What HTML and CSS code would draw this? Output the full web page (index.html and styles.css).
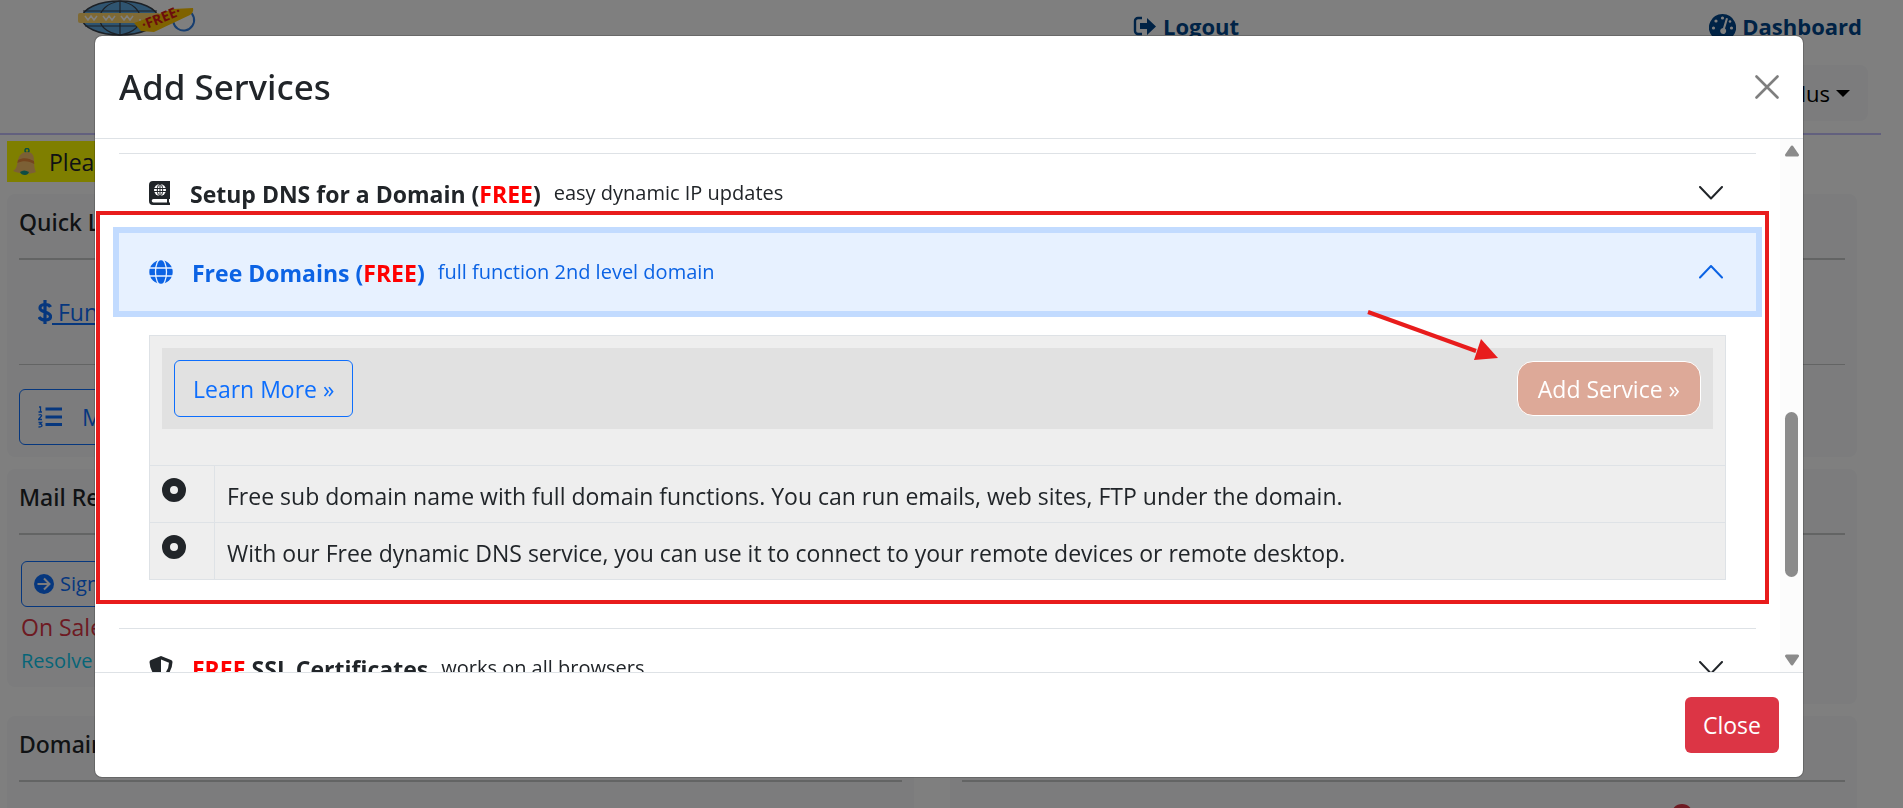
FILE: index.html
```html
<!DOCTYPE html>
<html lang="en">
<head>
  <meta charset="UTF-8">
  <meta name="viewport" content="width=device-width, initial-scale=1.0">
  <title>Dashboard - Add Services</title>
  <link rel="stylesheet" href="styles.css">
</head>
<body>

<div class="page">
  <header class="top">
    <div class="top-links">
      <svg class="logo" viewBox="0 0 120 36" aria-label="www free">
        <ellipse cx="42" cy="18" rx="38" ry="17" fill="#5fa8e0" stroke="#39424d" stroke-width="1.5"/>
        <path d="M42 1v34M5 11h74M7 26h70M42 1c-26 4-28 30 0 34M42 1c26 4 28 30 0 34" fill="none" stroke="#39424d" stroke-width="1.2"/>
        <rect x="0" y="13" width="82" height="10" rx="2" fill="#ffd56b"/>
        <path d="M7 16l3 4 3-4 3 4 3-4M25 16l3 4 3-4 3 4 3-4M43 16l3 4 3-4 3 4 3-4M61 20h2" fill="none" stroke="#fff" stroke-width="1.5"/>
        <path d="M97 14a10.500 10.500 0 1 0 14-3" fill="none" stroke="#2f7de0" stroke-width="2"/>
        <path d="M56 23L95 9l20-1q1 4-3 7L76 32l-13-1z" fill="#ffc400"/>
        <text x="66" y="30" transform="rotate(-22 66 30)" class="logo-text">·FREE·</text>
      </svg>
      <a class="top-link logout" href="#">
        <svg width="24" height="24" viewBox="0 0 24 24"><path d="M9 4H5a3 3 0 0 0-3 3v10a3 3 0 0 0 3 3h4" fill="none" stroke="currentColor" stroke-width="2.4"/><path d="M7 9h7V4l9 8.500-9 8.500v-6H7z" fill="currentColor"/></svg>
        Logout
      </a>
      <a class="top-link" href="#">
        <svg width="27" height="24" viewBox="0 0 27 24"><path d="M13.500 0A13.500 13.500 0 0 0 3 22q1 2 3 2h15q2 0 3-2A13.500 13.500 0 0 0 13.500 0z" fill="currentColor"/><g fill="#fff"><circle cx="13.500" cy="4" r="1.600"/><circle cx="7" cy="7" r="1.600"/><circle cx="4.500" cy="14" r="1.600"/><circle cx="22.500" cy="14" r="1.600"/><circle cx="21" cy="7.500" r="1.300"/><path d="M17 4l2 .6-3 10a3 3 0 1 1-2-.6z"/></g></svg>
        Dashboard
      </a>
    </div>
    <div class="top-menu">
      <button class="plan-btn" type="button">Plus <span class="caret"></span></button>
    </div>
  </header>

  <div class="notice">
    <svg width="24" height="28" viewBox="0 0 24 28"><circle cx="14" cy="2.500" r="2" fill="none" stroke="#1a9a86" stroke-width="1.500"/><path d="M14 4c5 0 7 3 7 8 0 7 1 10 2 12-6 3-16 2-23-1 4-2 4-7 5-11 1-5 4-8 9-8z" fill="#f9c06a"/><path d="M5 12c5-3 11-2 16 1l.3 3c-5-3-11-4-17-1z" fill="#e88a3c"/><path d="M7 24q4-3 9 0-1 3-4 3-4 0-5-3z" fill="#1a9a86"/></svg>
    <span>Please</span>
  </div>

  <main class="cards">
    <section class="card card-links">
      <h2>Quick Links</h2>
      <hr class="thick">
      <p class="fund"><svg width="14" height="24" viewBox="0 0 14 24"><path d="M7 0v24M12.500 7C11 3.500 2 3.500 2 8c0 5 10.500 3 10.500 8.500C12.500 21 3 21 1 17" fill="none" stroke="currentColor" stroke-width="3.200"/></svg><a href="#">&nbsp;Funds</a></p>
      <hr>
      <button class="outline-btn" type="button">
        <svg width="24" height="22" viewBox="0 0 24 22"><path d="M7.500 3H24M7.500 11H24M7.500 18.500H24" stroke="currentColor" stroke-width="3"/><path d="M1 1h1.500v5M.5 6H4M.5 9Q4 8 3.500 10L.5 13.500H4M.5 16.500h3L2 18q2 0 2 1.500T.5 21" fill="none" stroke="currentColor" stroke-width="1.300"/></svg>
        <span>Menu</span>
      </button>
    </section>
    <section class="card card-links">
      <div class="card-head"></div>
      <hr class="thick">
      <div class="fund"></div>
      <hr>
    </section>

    <section class="card">
      <h2>Mail Relay</h2>
      <hr class="thick">
      <button class="outline-btn small" type="button">
        <svg width="20" height="20" viewBox="0 0 20 20"><circle cx="10" cy="10" r="10" fill="currentColor"/><path d="M3.500 10H15M10 4.500l5.500 5.500-5.500 5.500" fill="none" stroke="#f8f9fa" stroke-width="2"/></svg>
        <span>Sign Up</span>
      </button>
      <p class="sale">On Sale</p>
      <p class="resolve">Resolve</p>
    </section>
    <section class="card card-mail">
      <div class="card-head"></div>
      <hr class="thick">
    </section>

    <section class="card card-domain">
      <h2>Domains</h2>
      <hr class="thick">
    </section>
    <section class="card card-domain">
      <div class="card-head"></div>
      <hr class="thick">
      <span class="dot"></span>
    </section>
  </main>
</div>

<div class="backdrop">
  <div class="modal" role="dialog" aria-labelledby="modalTitle">
    <div class="modal-header">
      <h1 id="modalTitle">Add Services</h1>
      <button class="x-btn" type="button" aria-label="Close">
        <svg width="24" height="24" viewBox="0 0 24 24"><path d="M1.500 1.500l21 21M22.500 1.500l-21 21" stroke="#7f7f7f" stroke-width="2.600" stroke-linecap="round"/></svg>
      </button>
    </div>

    <div class="modal-body">
      <div class="accordion">
        <div class="item">
          <button class="item-btn" type="button">
            <svg class="icon" width="22" height="24" viewBox="0 0 22 24"><path d="M4 0h17v18h-1v3.500h1V24H4a4 4 0 0 1-4-4V4a4 4 0 0 1 4-4z" fill="#212529"/><path d="M4.500 18H18v3.500H4.500a1.700 1.700 0 0 1 0-3.500z" fill="#fff"/><circle cx="11" cy="9" r="6" fill="#fff"/><path d="M5 7.500h12M5 10.500h12M11 3v12" stroke="#212529" stroke-width="1"/><ellipse cx="11" cy="9" rx="2.700" ry="6" fill="none" stroke="#212529"/></svg>
            <strong>Setup DNS for a Domain (<em>FREE</em>)</strong>
            <span class="hint">easy dynamic IP updates</span>
            <svg class="chevron" width="24" height="14" viewBox="0 0 24 14"><path d="M1 1l11 11.500L23 1" fill="none" stroke="currentColor" stroke-width="2" stroke-linecap="round" stroke-linejoin="round"/></svg>
          </button>
        </div>

        <div class="item open">
          <button class="item-btn" type="button" aria-expanded="true">
            <svg class="icon" width="24" height="24" viewBox="0 0 24 24"><circle cx="12" cy="12" r="11.700" fill="currentColor"/><path d="M0 8h24M0 16h24" stroke="#e7f1ff" stroke-width="1.300"/><ellipse cx="12" cy="12" rx="5.500" ry="13" fill="none" stroke="#e7f1ff" stroke-width="1.300"/></svg>
            <strong>Free Domains (<em>FREE</em>)</strong>
            <span class="hint">full function 2nd level domain</span>
            <svg class="chevron" width="24" height="14" viewBox="0 0 24 14"><path d="M1 12.500L12 1l11 11.500" fill="none" stroke="currentColor" stroke-width="2" stroke-linecap="round" stroke-linejoin="round"/></svg>
          </button>
          <div class="item-body">
            <table class="features">
              <tr>
                <td colspan="2">
                  <div class="actions">
                    <button class="learn-btn" type="button">Learn More »</button>
                    <button class="add-btn" type="button">Add Service »</button>
                  </div>
                </td>
              </tr>
              <tr>
                <td class="bullet"><svg width="24" height="24" viewBox="0 0 24 24"><circle cx="12" cy="12" r="8" fill="none" stroke="#212529" stroke-width="8"/></svg></td>
                <td class="feature">Free sub domain name with full domain functions. You can run emails, web sites, FTP under the domain.</td>
              </tr>
              <tr>
                <td class="bullet"><svg width="24" height="24" viewBox="0 0 24 24"><circle cx="12" cy="12" r="8" fill="none" stroke="#212529" stroke-width="8"/></svg></td>
                <td class="feature">With our Free dynamic DNS service, you can use it to connect to your remote devices or remote desktop.</td>
              </tr>
            </table>
          </div>
          <!-- highlight frame and arrow -->
          <div class="frame"></div>
          <svg class="arrow" width="132" height="56" viewBox="0 0 132 56"><path d="M1 2l108 39" stroke="#e81c1c" stroke-width="4"/><path d="M114 29l17 19-24 2z" fill="#e81c1c"/></svg>
        </div>

        <div class="item">
          <button class="item-btn" type="button">
            <svg class="icon" width="24" height="24" viewBox="0 0 24 24"><path d="M12 0l10 4q1.500.7 1.500 2Q23 18 12 24 1 18 .5 6q0-1.300 1.500-2z" fill="#212529"/><path d="M12 3.500l8 3.300Q19.500 16 12 20.500z" fill="#fff"/></svg>
            <strong><em>FREE</em> SSL Certificates</strong>
            <span class="hint">works on all browsers</span>
            <svg class="chevron" width="24" height="14" viewBox="0 0 24 14"><path d="M1 1l11 11.500L23 1" fill="none" stroke="currentColor" stroke-width="2" stroke-linecap="round" stroke-linejoin="round"/></svg>
          </button>
        </div>
      </div>

      <div class="scrollbar">
        <svg width="16" height="12" viewBox="0 0 16 12"><path d="M8 2l5.500 8h-11z" fill="#8b8b8b" stroke="#8b8b8b" stroke-width="3" stroke-linejoin="round"/></svg>
        <div class="track-top"></div>
        <div class="thumb"></div>
        <div class="track-bottom"></div>
        <svg width="16" height="12" viewBox="0 0 16 12"><path d="M8 10l5.500-8h-11z" fill="#8b8b8b" stroke="#8b8b8b" stroke-width="3" stroke-linejoin="round"/></svg>
      </div>
    </div>

    <div class="modal-footer">
      <button class="close-btn" type="button">Close</button>
    </div>
  </div>
</div>

</body>
</html>
```

FILE: styles.css
```css
* {
  box-sizing: border-box;
}
body {
  margin: 0;
  background-color: #fff;
  color: #212529;
  font-family: "Open Sans", "Noto Sans", sans-serif;
  font-size: 23px;
  line-height: 36px;
}
button {
  font: inherit;
  cursor: pointer;
}
h1, h2, p {
  margin: 0;
}
h1, h2 {
  font-family: "Noto Sans", sans-serif;
  font-weight: 500;
}
h2 {
  font-size: 23px;
  line-height: 32px;
}
hr {
  margin: 0;
  border: 0;
  border-top: 1px solid #c7c8c9;
}
hr.thick {
  border-top-width: 2px;
}

/* page behind the dialog */
.page {
  height: 100vh;
  padding-right: 22px;
  overflow: hidden;
}
.top {
  height: 135px;
  border-bottom: 2px solid #c4c0fc;
}
.top-links {
  display: flex;
  align-items: flex-start;
  height: 65px;
  padding: 0 19px 0 78px;
}
.logo {
  width: 120px;
  height: 36px;
}
.logo-text {
  font-size: 14px;
  font-weight: bold;
  fill: #d81b1b;
}
.top-link {
  display: flex;
  align-items: center;
  gap: 6px;
  padding-top: 8px;
  color: #00468c;
  font-size: 22px;
  font-weight: bold;
  text-decoration: none;
}
.logout {
  margin: 0 auto 0 935px;
}
.top-menu {
  display: flex;
  justify-content: flex-end;
  padding-right: 13px;
}
.plan-btn {
  display: flex;
  align-items: center;
  gap: 6px;
  height: 56px;
  padding: 0 18px;
  border: 0;
  border-radius: 8px;
  background-color: #f8f9fa;
  color: #000;
  font-size: 22px;
}
.caret {
  border: 7px solid transparent;
  border-top-color: #000;
  border-bottom: 0;
}
.notice {
  display: flex;
  align-items: center;
  gap: 12px;
  width: 50%;
  height: 41px;
  margin: 6px 0 12px 7px;
  padding-left: 6px;
  background-color: #ff0;
}
.cards {
  display: grid;
  grid-template-columns: 1fr 1fr;
  gap: 12px 36px;
  align-items: start;
  padding: 0 24px 0 7px;
}
.card {
  padding: 12px;
  border-radius: 8px;
  background-color: #f8f9fa;
}
.card h2,
.card-head {
  height: 32px;
  margin-bottom: 20px;
}
.card-links {
  height: 263px;
}
.card-mail {
  height: 235px;
}
.card-domain {
  height: 240px;
}
.fund {
  display: flex;
  align-items: center;
  height: 104px;
  padding-left: 19px;
  color: #0d6efd;
}
.fund a {
  color: #0d6efd;
}
.outline-btn {
  display: flex;
  align-items: center;
  gap: 20px;
  width: 240px;
  height: 56px;
  margin-top: 24px;
  padding: 0 18px;
  border: 1px solid #0d6efd;
  border-radius: 6px;
  background: none;
  color: #0d6efd;
}
.outline-btn.small {
  gap: 6px;
  height: 46px;
  margin: 26px 0 0 2px;
  padding: 0 12px;
  font-size: 20px;
}
.sale {
  padding-left: 2px;
  color: #dc3545;
  line-height: 40px;
}
.resolve {
  padding-left: 2px;
  color: #0dcaf0;
  font-size: 20px;
  line-height: 28px;
}
.dot {
  display: block;
  width: 22px;
  height: 22px;
  margin: 22px 152px 0 auto;
  border-radius: 50%;
  background-color: #dc3545;
}

/* dialog */
.backdrop {
  position: fixed;
  inset: 0;
  padding: 35px 99px 30px 94px;
  background-color: rgba(0, 0, 0, 0.5);
}
.modal {
  display: flex;
  flex-direction: column;
  height: 100%;
  border: 1px solid rgba(0, 0, 0, 0.175);
  border-radius: 8px;
  background-color: #fff;
  background-clip: padding-box;
  overflow: hidden;
}
.modal-header {
  display: flex;
  align-items: center;
  justify-content: space-between;
  padding: 24px;
  border-bottom: 1px solid #dee2e6;
}
.modal-header h1 {
  font-size: 35px;
  line-height: 54px;
}
.x-btn {
  display: flex;
  padding: 0;
  border: 0;
  background: none;
}
.modal-body {
  display: flex;
  flex: 1;
  min-height: 0;
}
.accordion {
  flex: 1;
  padding: 14px 24px 0;
  overflow: hidden;
}
.item {
  position: relative;
  border-top: 1px solid #dee2e6;
}
.item-btn {
  display: flex;
  align-items: center;
  width: 100%;
  height: 78px;
  padding: 0 33px 0 30px;
  border: 0;
  background: none;
  color: #212529;
  text-align: left;
}
.item-btn strong {
  margin: 2px 13px 0 19px;
}
.item-btn em {
  color: #f00;
  font-style: normal;
}
.hint {
  font-size: 20px;
}
.chevron {
  margin-left: auto;
}
.open .item-btn {
  background-color: #e7f1ff;
  color: #0c63e4;
  box-shadow: 0 0 0 6px #c2dbff;
}
.item-body {
  padding: 24px 30px 48px;
}
.features {
  width: 100%;
  border-collapse: collapse;
  background-color: #eee;
}
.features td {
  padding: 12px;
  border: 1px solid #dee2e6;
  vertical-align: top;
}
.features .bullet {
  width: 65px;
  line-height: 0;
}
.features .feature {
  padding: 14px 12px 10px;
  line-height: 32px;
}
.actions {
  display: flex;
  align-items: center;
  justify-content: space-between;
  margin-bottom: 24px;
  padding: 12px;
  background-color: #e1e1e1;
}
.learn-btn, .add-btn {
  height: 57px;
  padding: 0 18px;
  border: 1px solid #0d6efd;
  border-radius: 6px;
  background: none;
  color: #0d6efd;
}
.add-btn {
  height: 55px;
  padding: 0 20px;
  border-color: #fff;
  border-radius: 16px;
  background-color: #dda998;
  color: #fff;
}
.frame {
  position: absolute;
  inset: -22px -13px 24px -23px;
  border: 4px solid #e81c1c;
  pointer-events: none;
}
.arrow {
  position: absolute;
  top: 77px;
  right: 257px;
}
.scrollbar {
  display: flex;
  flex-direction: column;
  align-items: center;
  width: 23px;
  padding: 6px 0;
  background-color: #fcfcfc;
}
.track-top {
  flex: 255;
}
.thumb {
  width: 13px;
  height: 165px;
  border-radius: 7px;
  background-color: #8b8b8b;
}
.track-bottom {
  flex: 77;
}
.modal-footer {
  display: flex;
  justify-content: flex-end;
  padding: 24px;
  border-top: 1px solid #dee2e6;
}
.close-btn {
  height: 56px;
  padding: 0 18px;
  border: 0;
  border-radius: 6px;
  background-color: #dc3545;
  color: #fff;
}
```
